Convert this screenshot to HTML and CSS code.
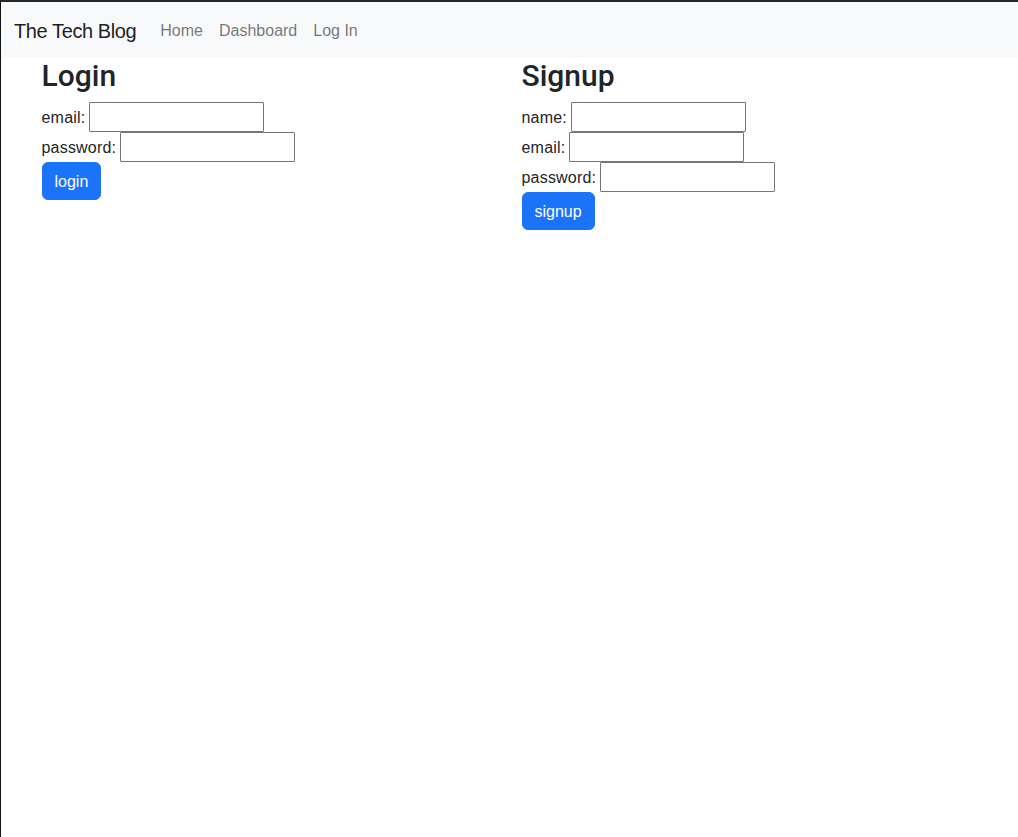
FILE: index.html
```html
<!DOCTYPE html>
<html lang="en">
<head>
<meta charset="utf-8">
<title>The Tech Blog</title>
<link rel="stylesheet" href="styles.css">
</head>
<body>
<div class="frame">
  <nav class="navbar">
    <a class="brand" href="#">The Tech Blog</a>
    <ul class="nav">
      <li><a href="#">Home</a></li>
      <li><a href="#">Dashboard</a></li>
      <li><a href="#">Log In</a></li>
    </ul>
  </nav>
  <main class="container">
    <div class="row">
      <section class="col">
        <h2>Login</h2>
        <form class="form">
          <label class="field"><span class="lbl">email:</span> <input type="text"></label>
          <label class="field"><span class="lbl">password:</span> <input type="password"></label>
          <div><button type="button" class="btn">login</button></div>
        </form>
      </section>
      <section class="col">
        <h2>Signup</h2>
        <form class="form">
          <label class="field"><span class="lbl">name:</span> <input type="text"></label>
          <label class="field"><span class="lbl">email:</span> <input type="text"></label>
          <label class="field"><span class="lbl">password:</span> <input type="password"></label>
          <div><button type="button" class="btn">signup</button></div>
        </form>
      </section>
    </div>
  </main>
</div>
</body>
</html>
```
FILE: styles.css
```css
* { box-sizing: border-box; }
html, body { margin: 0; padding: 0; }
body {
  font-family: "Liberation Sans", Arial, sans-serif;
  font-size: 16px;
  line-height: 1.5;
  color: #212529;
  background: #fff;
}
.frame {
  min-height: 100vh;
  border-top: 2px solid #262626;
  border-left: 1px solid #111;
}
.navbar {
  display: flex;
  align-items: center;
  height: 56px;
  padding: 2px 13px 0;
  background: #f8f9fa;
}
.brand {
  font-size: 20px;
  letter-spacing: -0.4px;
  color: rgba(0,0,0,.9);
  text-decoration: none;
  margin-right: 16px;
  line-height: 30px;
}
.nav {
  display: flex;
  list-style: none;
  margin: 0;
  padding: 0;
}
.nav a {
  display: block;
  padding: 8px 8px;
  color: rgba(0,0,0,.55);
  text-decoration: none;
}
.container {
  width: 960px;
  margin: 0 auto;
  padding: 0 12px;
}
.row {
  display: flex;
  margin: 0 -12px;
}
.col {
  flex: 0 0 50%;
  padding: 0 12px;
}
h2 {
  margin: 0 0 8px;
  font-family: Roboto, "Liberation Sans", sans-serif;
  font-size: 30px;
  font-weight: 500;
  line-height: 1.2;
}
.form {
  display: flex;
  flex-direction: column;
}
.field {
  display: flex;
  align-items: center;
  gap: 4px;
  height: 30px;
  letter-spacing: 0.2px;
}
.lbl {
  margin-top: 2px;
}
.field input {
  width: 175px;
  height: 30px;
  border: 1px solid #767676;
  border-radius: 1px;
  padding: 2px 4px;
  font: inherit;
  margin: 0;
}
.btn {
  height: 38px;
  padding: 7px 12px 5px;
  font: inherit;
  line-height: 24px;
  color: #fff;
  background: #1a73f8;
  border: 1px solid #1a73f8;
  border-radius: 6px;
  cursor: pointer;
}
```
